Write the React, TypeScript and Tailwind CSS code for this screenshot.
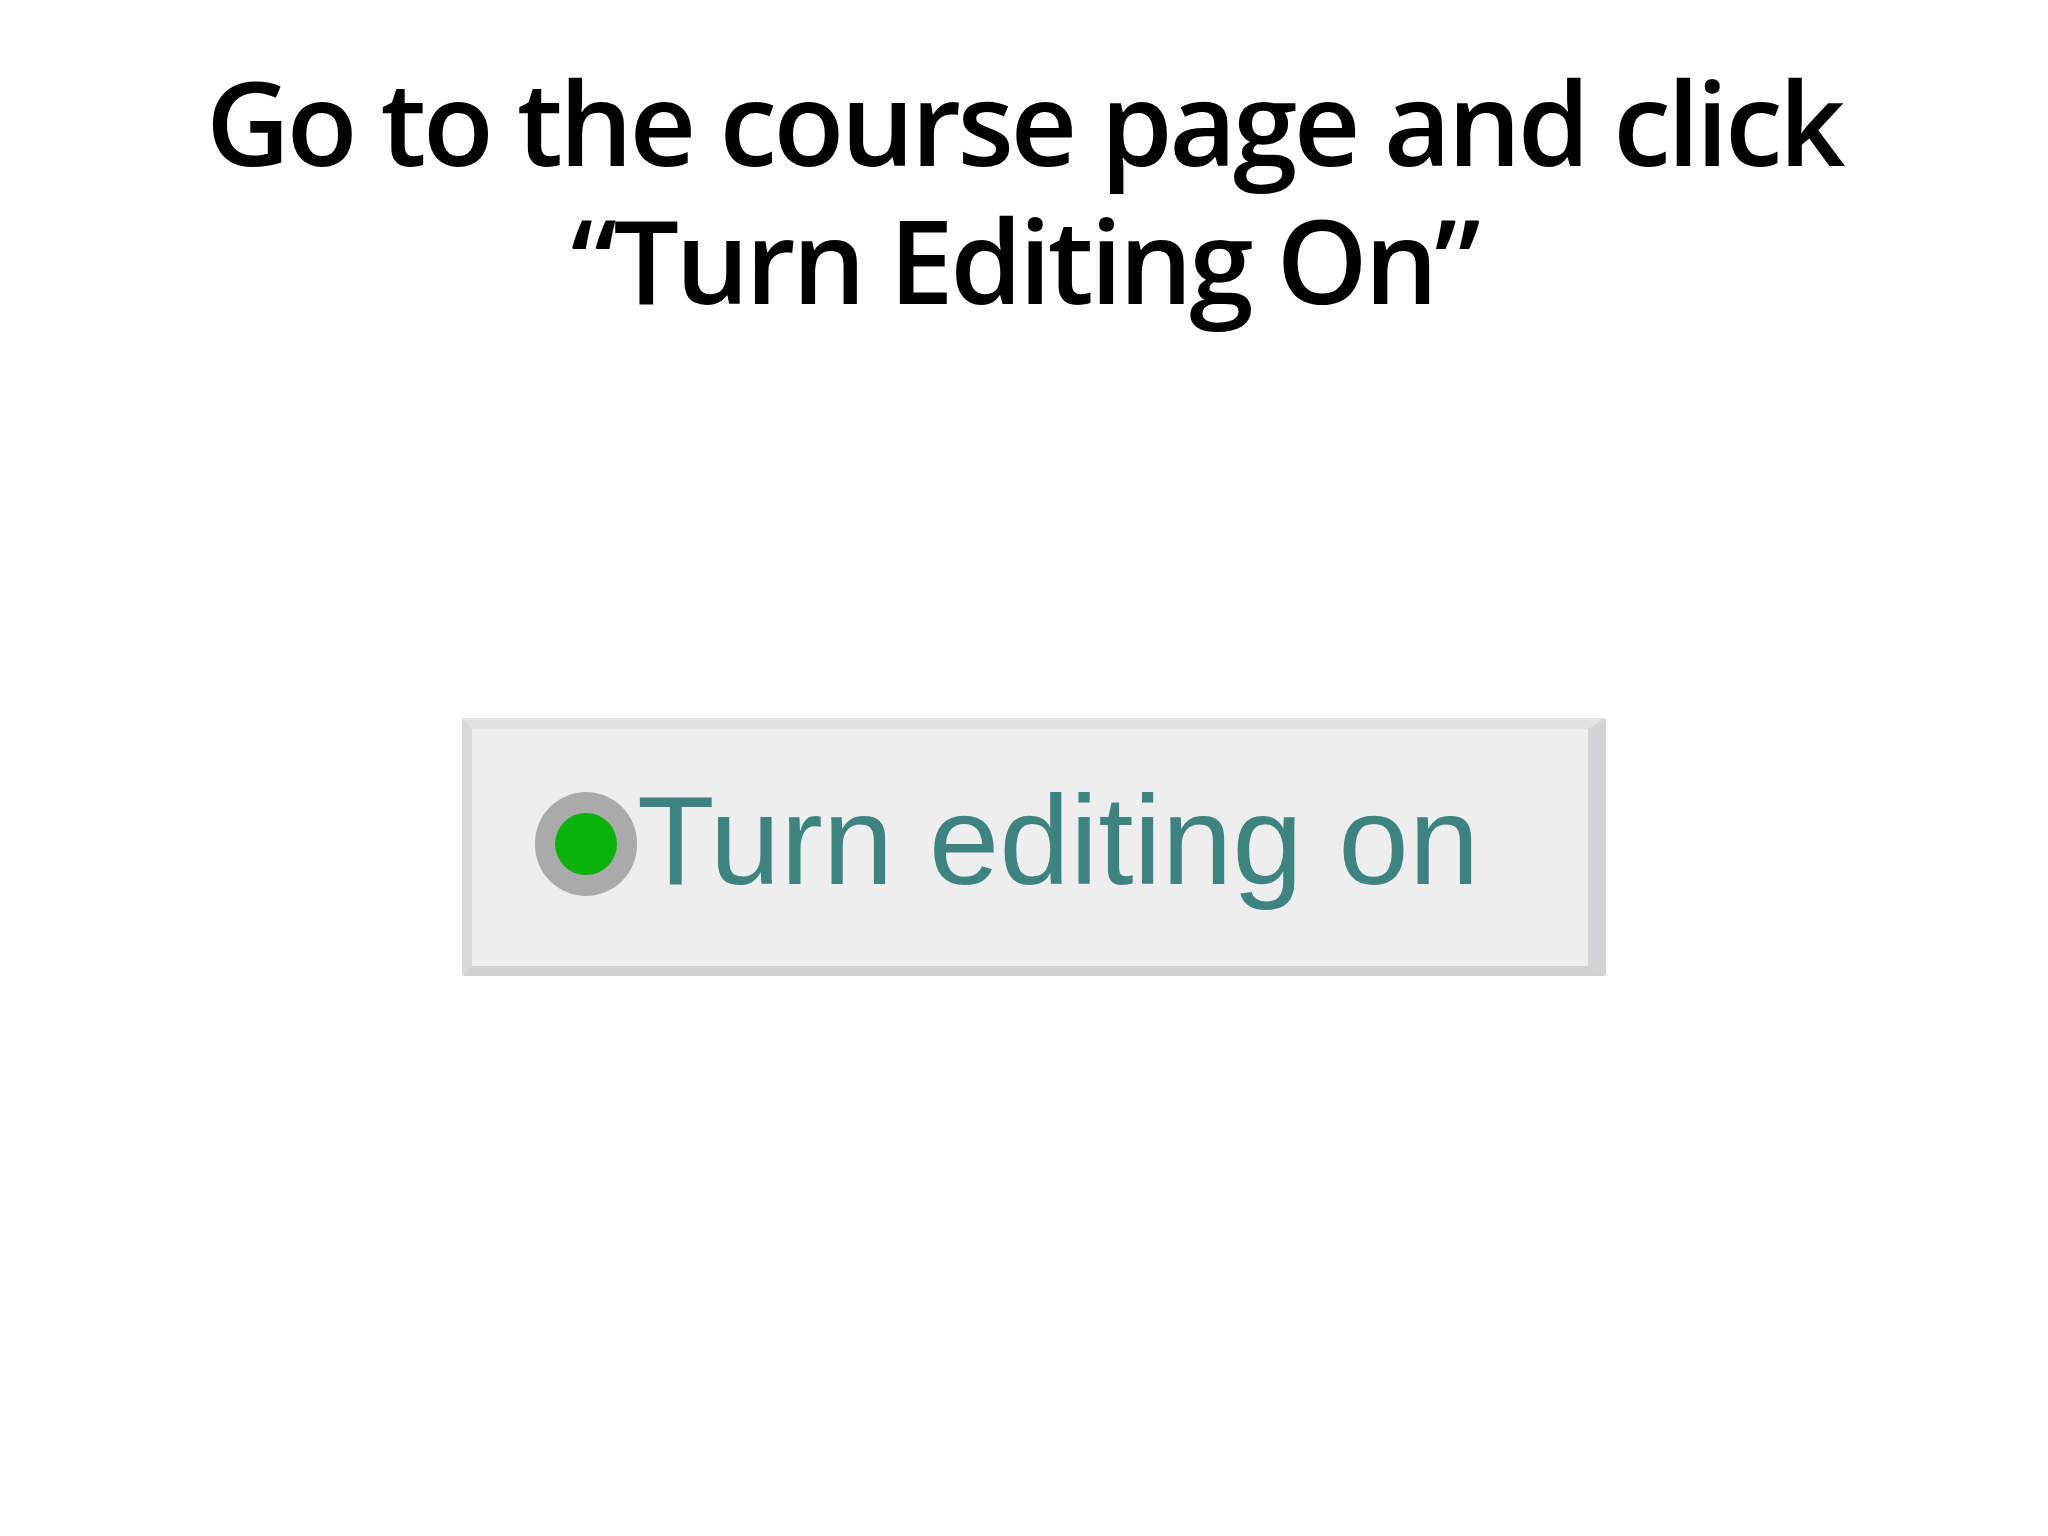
import React from "react";

export default function App() {
  return (
    <div className="w-[2048px] h-[1536px] bg-white flex flex-col">
      <h1
        className="pt-[52px] text-center font-semibold text-[116px] leading-[138px] tracking-[-3.5px] text-black"
        style={{ fontFamily: '"Open Sans", "Noto Sans", sans-serif' }}
      >
        Go to the course page and click
        <br />
        “Turn Editing On”
      </h1>
      <div className="ml-[462px] mt-[390px] w-[1144px] h-[258px] bg-[#eeeeee] border-t-[11px] border-t-[#e2e2e2] border-b-[10px] border-b-[#d1d1d3] border-l-[10px] border-l-[#d8d8d8] border-r-[18px] border-r-[#d4d4d6] rounded-[3px] flex items-center pl-[63px] pb-[8px]">
        <div className="w-[102px] h-[104px] rounded-full bg-[#aaaaaa] flex items-center justify-center shrink-0">
          <div className="w-[62px] h-[62px] rounded-full bg-[#0ab20a]" />
        </div>
        <span
          className="text-[127px] leading-none text-[#3d8380] -mt-[6px]"
          style={{ fontFamily: '"Liberation Sans", Arial, sans-serif' }}
        >
          Turn editing on
        </span>
      </div>
    </div>
  );
}
